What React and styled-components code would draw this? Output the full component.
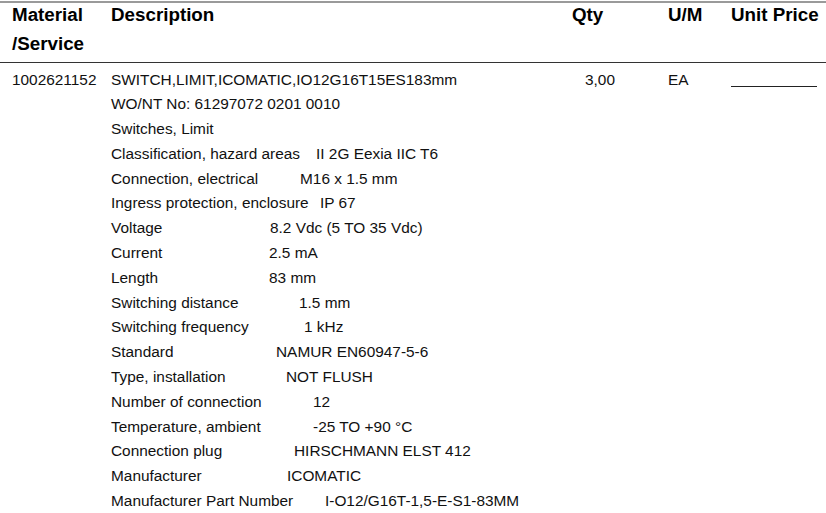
import React from "react"
import styled, { createGlobalStyle } from "styled-components"

const GlobalStyle = createGlobalStyle`
  html, body {
    margin: 0;
    padding: 0;
    background: #ffffff;
  }
  body {
    font-family: "Liberation Sans", Arial, sans-serif;
    color: #111;
  }
`

const cols = "12px 99px 461px 96px 63px 1fr"

const Page = styled.div`
  width: 826px;
  height: 513px;
  overflow: hidden;
  padding-top: 1px;
  box-sizing: border-box;
`

const Header = styled.div`
  display: grid;
  grid-template-columns: ${cols};
  border-top: 2px solid #9a9a9a;
  border-bottom: 1px solid #333;
  padding-bottom: 4px;
`

const HeadCell = styled.div`
  grid-column: ${p => p.col};
  margin-top: -3px;
  font-size: 18.8px;
  font-weight: bold;
  line-height: 29px;
  color: #000;
  white-space: nowrap;
`

const Item = styled.div`
  display: grid;
  grid-template-columns: ${cols};
  padding-top: 4.5px;
  font-size: 15.4px;
  line-height: 24.8px;
`

const Cell = styled.div`
  grid-column: ${p => p.col};
  padding-left: ${p => p.indent || 0}px;
  white-space: nowrap;
`

const Line = styled.div`
  display: flex;
  white-space: nowrap;
`

const Label = styled.span`
  flex: 0 0 ${p => p.w}px;
`

const Blank = styled.div`
  width: 86px;
  height: 18.5px;
  border-bottom: 1.5px solid #222;
`

const specs = [
  ["Classification, hazard areas", "II 2G Eexia IIC T6", 205],
  ["Connection, electrical", "M16 x 1.5 mm", 189],
  ["Ingress protection, enclosure", "IP 67", 209],
  ["Voltage", "8.2 Vdc (5 TO 35 Vdc)", 159],
  ["Current", "2.5 mA", 158],
  ["Length", "83 mm", 158],
  ["Switching distance", "1.5 mm", 188],
  ["Switching frequency", "1 kHz", 193],
  ["Standard", "NAMUR EN60947-5-6", 165],
  ["Type, installation", "NOT FLUSH", 175],
  ["Number of connection", "12", 202],
  ["Temperature, ambient", "-25 TO +90 °C", 202],
  ["Connection plug", "HIRSCHMANN ELST 412", 183],
  ["Manufacturer", "ICOMATIC", 176],
  ["Manufacturer Part Number", "I-O12/G16T-1,5-E-S1-83MM", 214],
]

const App = () => {
  return (
    <Page>
      <GlobalStyle />
      <Header>
        <HeadCell col={2}>
          Material
          <br />
          /Service
        </HeadCell>
        <HeadCell col={3}>Description</HeadCell>
        <HeadCell col={4}>Qty</HeadCell>
        <HeadCell col={5}>U/M</HeadCell>
        <HeadCell col={6}>Unit Price</HeadCell>
      </Header>

      <Item>
        <Cell col={2}>1002621152</Cell>
        <Cell col={3}>
          <Line>SWITCH,LIMIT,ICOMATIC,IO12G16T15ES183mm</Line>
          <Line>WO/NT No: 61297072 0201 0010</Line>
          <Line>Switches, Limit</Line>
          {specs.map(([label, value, w]) => (
            <Line key={label}>
              <Label w={w}>{label}</Label>
              {value}
            </Line>
          ))}
        </Cell>
        <Cell col={4} indent={13}>3,00</Cell>
        <Cell col={5}>EA</Cell>
        <Cell col={6}>
          <Blank />
        </Cell>
      </Item>
    </Page>
  )
}

export default App
